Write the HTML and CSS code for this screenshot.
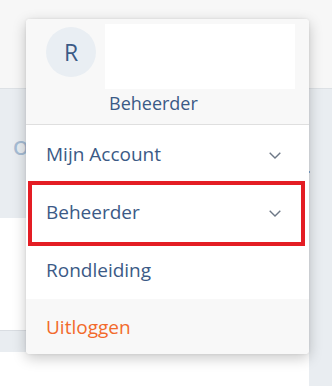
FILE: index.html
```html
<!DOCTYPE html>
<html lang="nl">
<head>
<meta charset="utf-8">
<link rel="stylesheet" href="styles.css">
</head>
<body>
<div class="page">
  <div class="topbar"></div>
  <div class="content">
    <div class="intro"><span class="ghost">O</span><span class="dot"></span></div>
    <div class="card card-a"></div>
    <div class="gap-band"></div>
    <div class="card card-b"></div>
  </div>

  <div class="menu">
    <div class="menu-head">
      <div class="avatar">R</div>
      <div class="head-col">
        <div class="logo-box"></div>
        <div class="role">Beheerder</div>
      </div>
    </div>
    <div class="item">
      <span>Mijn Account</span>
      <svg class="chev" width="12" height="7" viewBox="0 0 12 7"><path d="M0.7 0.7 L6 6 L11.3 0.7" fill="none" stroke="#6d7886" stroke-width="1.4"/></svg>
    </div>
    <div class="item">
      <span>Beheerder</span>
      <svg class="chev" width="12" height="7" viewBox="0 0 12 7"><path d="M0.7 0.7 L6 6 L11.3 0.7" fill="none" stroke="#6d7886" stroke-width="1.4"/></svg>
    </div>
    <div class="item">
      <span>Rondleiding</span>
    </div>
    <div class="item logout">
      <span>Uitloggen</span>
    </div>
  </div>
  <div class="highlight"></div>
</div>
</body>
</html>
```

FILE: styles.css
```css
* { box-sizing: border-box; }
html, body { margin: 0; padding: 0; }
body {
  width: 332px;
  height: 386px;
  overflow: hidden;
  background: #e9edf1;
  font-family: "Open Sans", "Noto Sans", sans-serif;
}
.page {
  position: relative;
  width: 332px;
  height: 386px;
}
.topbar {
  height: 89px;
  background: #f7f7f7;
  border-bottom: 1px solid #dde1e5;
}
.content {
  display: flex;
  flex-direction: column;
}
.intro {
  height: 129px;
  position: relative;
}
.ghost {
  position: absolute;
  left: 13px;
  top: 45px;
  font-size: 20px;
  font-weight: 600;
  color: #a6bcd4;
}
.dot {
  position: absolute;
  left: 308px;
  top: 82px;
  width: 2px;
  height: 2px;
  background: #7fa6d0;
}
.card {
  width: 309px;
  background: #ffffff;
}
.card-a {
  height: 113px;
  border-bottom: 1px solid #d9dde2;
}
.gap-band { height: 21px; }
.card-b { height: 40px; }

.menu {
  position: absolute;
  left: 26px;
  top: 19px;
  width: 283px;
  background: #ffffff;
  border-radius: 4px;
  box-shadow: 0 4px 14px rgba(0, 0, 0, 0.22), 0 0 3px rgba(0, 0, 0, 0.08);
  overflow: hidden;
  color: #3b5a86;
}
.menu-head {
  height: 106px;
  background: #f8f8f8;
  border-bottom: 1px solid #dfdfdf;
  display: flex;
  padding: 5px 14px 0 20px;
  gap: 9px;
}
.avatar {
  width: 50px;
  height: 50px;
  margin-top: 3px;
  flex: none;
  border-radius: 50%;
  background: #e9eef3;
  display: flex;
  align-items: center;
  justify-content: center;
  font-size: 23px;
  color: #3b5a86;
}
.head-col {
  flex: 1;
  display: flex;
  flex-direction: column;
}
.logo-box {
  height: 65px;
  background: #ffffff;
}
.role {
  padding-left: 4px;
  margin-top: 1px;
  font-size: 18px;
  line-height: 26px;
}
.item {
  height: 58px;
  display: flex;
  align-items: center;
  justify-content: space-between;
  padding: 0 28px 0 20px;
  font-size: 19px;
}
.chev { display: block; margin-top: 2px; }
.item.logout {
  height: 55px;
  background: #f8f8f8;
  color: #f26a2c;
}
.highlight {
  position: absolute;
  left: 28px;
  top: 181px;
  width: 277px;
  height: 65px;
  border: 4px solid #e41d24;
}
```
